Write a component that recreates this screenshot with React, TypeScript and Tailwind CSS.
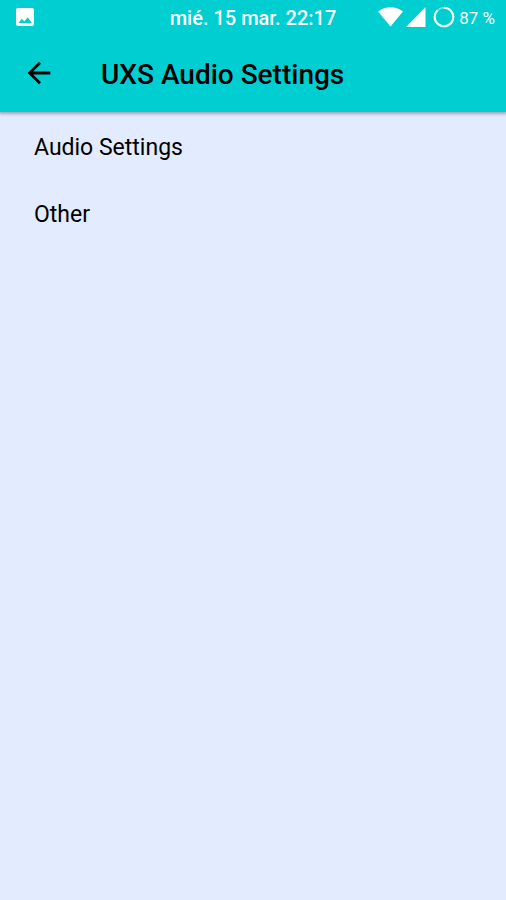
const settings = ["Audio Settings", "Other"];

function StatusBar() {
  return (
    <div className="grid h-[34px] grid-cols-[1fr_auto_1fr] items-center px-[11px] text-white">
      <svg className="ml-[5px] h-[18px] w-[18px]" viewBox="0 0 18 18" aria-label="Picture notification">
        <path
          fill="currentColor"
          fillRule="evenodd"
          d="M2 0h14a2 2 0 0 1 2 2v14a2 2 0 0 1-2 2H2a2 2 0 0 1-2-2V2a2 2 0 0 1 2-2ZM2.500 15h13.500l-4.400-5.700-3.300 4.200-2.500-2.800Z"
        />
      </svg>
      <span className="pt-px text-[20px] leading-6 font-medium">mié. 15 mar. 22:17</span>
      <div className="flex items-center justify-end">
        <svg className="h-5 w-[25px]" viewBox="0 0 25 20" aria-label="Wi-Fi">
          <path fill="currentColor" d="M0 4.500C7 -1.200 18 -1.200 25 4.500L12.500 19.500Z" />
        </svg>
        <svg className="ml-[3px] h-5 w-5" viewBox="0 0 20 20" aria-label="Signal">
          <path fill="currentColor" d="M0 20 19.500 0V20Z" />
        </svg>
        <svg className="ml-[7px] h-[22px] w-[22px]" viewBox="0 0 22 22" fill="none" stroke="currentColor" strokeWidth="2" aria-label="Battery">
          <circle cx="11" cy="11" r="9.300" opacity="0.4" />
          <path d="M11 1.700A9.300 9.300 0 1 1 4.200 4.650" />
        </svg>
        <span className="ml-1 pt-px text-[17px] leading-6 whitespace-nowrap">87 %</span>
      </div>
    </div>
  );
}

export default function App() {
  return (
    <div className="flex min-h-screen flex-col bg-[#e2ebff] font-[Roboto,sans-serif] text-black">
      <header className="bg-[#00ced1] shadow-[0_1px_3px_1px_rgba(60,60,80,0.4)]">
        <StatusBar />
        <div className="flex h-[78px] items-center pl-[22px]">
          <button type="button" aria-label="Back" className="flex h-[34px] w-[34px] items-center justify-center">
            <svg className="h-[34px] w-[34px]" viewBox="0 0 24 24" fill="currentColor">
              <path d="M20 11H7.830l5.590-5.590L12 4l-8 8 8 8 1.410-1.410L7.830 13H20v-2z" />
            </svg>
          </button>
          <h1 className="ml-[45px] pt-[3px] text-[28px] leading-8 font-medium">UXS Audio Settings</h1>
        </div>
      </header>
      <main>
        <ul className="pt-[2px]">
          {settings.map((label) => (
            <li key={label}>
              <button type="button" className="flex h-[67px] w-full items-center px-[34px] text-left text-[23px] leading-7">
                {label}
              </button>
            </li>
          ))}
        </ul>
      </main>
    </div>
  );
}
